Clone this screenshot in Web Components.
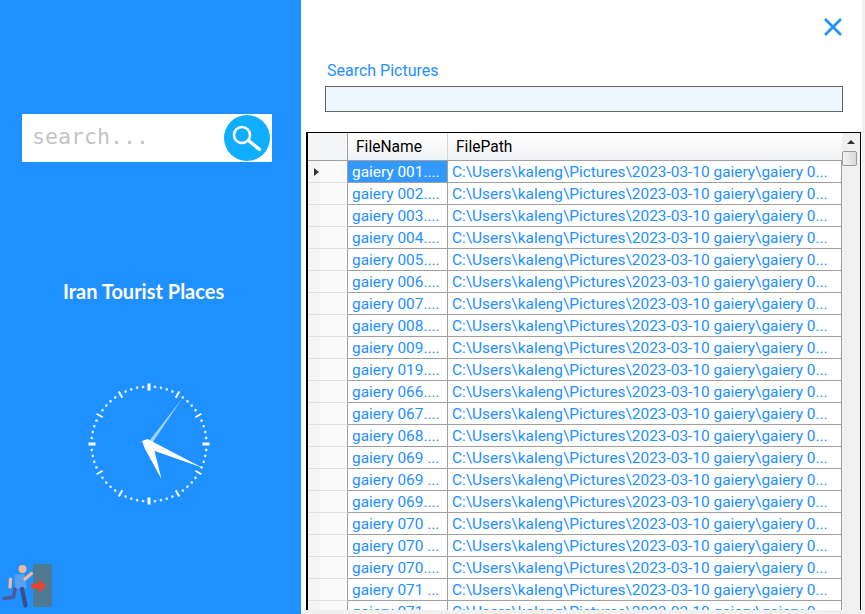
<!DOCTYPE html>
<html>
<head>
<meta charset="utf-8">
<style>
  html, body { margin: 0; height: 100%; background: #f0f0f0; overflow: hidden; }
  body { display: flex; width: 865px; height: 614px; font-family: Roboto, sans-serif; }
</style>
</head>
<body>
<side-panel></side-panel>
<main-panel></main-panel>

<script>
class SearchBox extends HTMLElement {
  constructor() {
    super();
    this.attachShadow({ mode: 'open' });
    this.shadowRoot.innerHTML = `
      <style>
        :host { display: flex; align-items: center; justify-content: space-between; width: 250px; height: 48px; background: #fff; border-radius: 1px; box-sizing: border-box; padding: 0 2px 0 10px; }
        span { font: 21.600px "DejaVu Sans Mono", monospace; color: #c4c4c4; position: relative; top: -2px; }
        svg { display: block; }
      </style>
      <span>search...</span>
      <svg width="46" height="46" viewBox="0 0 46 46">
        <circle cx="23" cy="23" r="23" fill="#0faeff"/>
        <circle cx="18" cy="20" r="8" fill="none" stroke="#fff" stroke-width="2.600"/>
        <path d="M25 26l10.500 8.500" stroke="#fff" stroke-width="3.400" stroke-linecap="round"/>
      </svg>`;
  }
}
customElements.define('search-box', SearchBox);

class ClockFace extends HTMLElement {
  constructor() {
    super();
    this.attachShadow({ mode: 'open' });
    let marks = '';
    for (let i = 0; i < 60; i++) {
      if (i % 5 === 0) {
        const big = i % 15 === 0;
        marks += `<rect x="-${big ? 1.500 : 1}" y="-60.500" width="${big ? 3 : 2}" height="7" fill="#fff" transform="rotate(${i * 6})"/>`;
      } else {
        marks += `<circle cx="0" cy="-57.500" r="1.400" fill="#cfe8ff" transform="rotate(${i * 6})"/>`;
      }
    }
    this.shadowRoot.innerHTML = `
      <style>
        :host { display: block; width: 122px; height: 122px; }
        svg { display: block; }
      </style>
      <svg width="122" height="122" viewBox="-61 -61 122 122">
        ${marks}
        <path d="M-1 -1.500L34 -46.500L1.500 1.500Z" fill="#fff" opacity=".6"/>
        <path d="M-7 -3L-1.500 -5L53 23.500L-3 4Z" fill="#fff"/>
        <path d="M-7 -3L3 -3L12.500 35L-4 5Z" fill="#fff"/>
      </svg>`;
  }
}
customElements.define('clock-face', ClockFace);

class ExitButton extends HTMLElement {
  constructor() {
    super();
    this.attachShadow({ mode: 'open' });
    this.shadowRoot.innerHTML = `
      <style>
        :host { display: block; width: 52px; height: 44px; }
        svg { display: block; }
      </style>
      <svg width="52" height="44" viewBox="0 0 52 44">
        <rect x="33" y="0" width="19" height="43" rx="1.500" fill="#4d7a90"/>
        <path d="M31 19.500h8v-4.500l7 7-7 7v-4.500h-8z" fill="#e8432f"/>
        <path d="M14.500 10.500l9.500-.500 1.500 4 1 10-11.500 1z" fill="#5aa0f0"/>
        <circle cx="22.500" cy="5" r="4" fill="#f5b79a"/>
        <path d="M25 15l6.500-5.500" stroke="#f5b79a" stroke-width="3.200" stroke-linecap="round"/>
        <path d="M10.500 15l-.500 8" stroke="#f5b79a" stroke-width="3.200" stroke-linecap="round"/>
        <path d="M15 25l-1.500 8-9.500 1.500" fill="none" stroke="#4b5b96" stroke-width="3.600" stroke-linecap="round" stroke-linejoin="round"/>
        <path d="M22 25l3.500 16.500" stroke="#3d4d85" stroke-width="4.200" stroke-linecap="round"/>
      </svg>`;
  }
}
customElements.define('exit-button', ExitButton);

class SidePanel extends HTMLElement {
  constructor() {
    super();
    this.attachShadow({ mode: 'open' });
    this.shadowRoot.innerHTML = `
      <style>
        :host { display: flex; flex-direction: column; align-items: flex-start; flex: 0 0 301px; height: 614px; background: #1e90ff; box-sizing: border-box; padding: 114px 0 0 22px; }
        h1 { margin: 116px 0 0 41px; font: 700 20px/26px Lato, sans-serif; color: #fff; white-space: nowrap; }
        clock-face { margin: 79px 0 0 65.500px; }
        exit-button { margin: auto 0 6px -22px; }
      </style>
      <search-box></search-box>
      <h1>Iran Tourist Places</h1>
      <clock-face></clock-face>
      <exit-button></exit-button>`;
  }
}
customElements.define('side-panel', SidePanel);

const NAMES = ['001....','002....','003....','004....','005....','006....','007....','008....','009....','019....','066....','067....','068....','069 ...','069 ...','069....','070 ...','070 ...','070....','071 ...','071 ...'];
const PATH = 'C:\\Users\\kaleng\\Pictures\\2023-03-10 gaiery\\gaiery 0...';

class PictureGrid extends HTMLElement {
  constructor() {
    super();
    this.attachShadow({ mode: 'open' });
    const rows = NAMES.map((n, i) => `
      <div class="row${i === 0 ? ' first' : ''}">
        <div class="rh">${i === 0 ? '<i></i>' : ''}</div>
        <div class="name">gaiery ${n}</div>
        <div class="path">${PATH}</div>
      </div>`).join('');
    this.shadowRoot.innerHTML = `
      <style>
        :host { display: flex; box-sizing: border-box; width: 555px; height: 478px; border: 1px solid #000; border-left-width: 2px; border-bottom: 0; background: #f0f0f0; overflow: hidden; }
        .table { flex: 0 0 534px; overflow: hidden; background: #f0f0f0; }
        .head { display: flex; height: 27px; background: linear-gradient(#fff, #f1f2f4); border-bottom: 1px solid #a0a0a0; }
        .head div { box-sizing: border-box; font: 15.600px/29px Roboto, sans-serif; color: #000; padding-left: 8px; }
        .head .corner { width: 40px; padding: 0; background: #f4f5f6; border-right: 1px solid #a0a0a0; }
        .head .n { width: 100px; border-right: 1px solid #d5d5d5; }
        .head .p { width: 394px; }
        .row { display: flex; height: 22px; box-sizing: border-box; }
        .rh { position: relative; flex: 0 0 40px; box-sizing: border-box; border-bottom: 1px solid #e0e0e0; border-right: 1px solid #a0a0a0; background: linear-gradient(90deg, #f4f5f6, #f4f5f6 12px, #fafafa 12px); }
        .rh i { position: absolute; left: 6px; top: 7px; border-left: 5px solid #333; border-top: 4px solid transparent; border-bottom: 4px solid transparent; }
        .name, .path { box-sizing: border-box; background: #fff; color: #1e90ff; font: 15.420px/22px Roboto, sans-serif; white-space: pre; overflow: hidden; border-bottom: 1px solid #a0a0a0; border-right: 1px solid #a0a0a0; padding-left: 4px; }
        .name { flex: 0 0 100px; }
        .path { flex: 0 0 394px; }
        .first .name { background: #3399ff; color: #fff; }
        .bar { flex: 0 0 18px; background: #f0f0f0; position: relative; }
        .bar b { position: absolute; left: 5px; top: 7px; border-bottom: 4px solid #333; border-left: 4px solid transparent; border-right: 4px solid transparent; }
        .bar u { position: absolute; left: 0; top: 18px; width: 13px; height: 13px; border: 1px solid #9a9a9a; border-radius: 2px; background: linear-gradient(90deg, #f4f4f4, #d8d8d8); }
      </style>
      <div class="table">
        <div class="head"><div class="corner"></div><div class="n">FileName</div><div class="p">FilePath</div></div>
        ${rows}
      </div>
      <div class="bar"><b></b><u></u></div>`;
  }
}
customElements.define('picture-grid', PictureGrid);

class MainPanel extends HTMLElement {
  constructor() {
    super();
    this.attachShadow({ mode: 'open' });
    this.shadowRoot.innerHTML = `
      <style>
        :host { display: flex; flex-direction: column; flex: 0 0 561px; height: 610px; background: #fff; box-sizing: border-box; }
        .top { display: flex; justify-content: flex-end; padding: 17px 19px 0 0; }
        svg { display: block; }
        label { margin: 24px 0 0 26px; font: 16px/20px Roboto, sans-serif; color: #1e90ff; }
        .input { box-sizing: border-box; width: 518px; height: 26px; margin: 5px 0 0 24px; background: #eef6ff; border: 1px solid #666; }
        picture-grid { margin: 20px 0 0 5px; }
      </style>
      <div class="top">
        <svg width="20" height="20" viewBox="0 0 20 20"><path d="M2 2L18 18M18 2L2 18" stroke="#1e90ff" stroke-width="2.600"/></svg>
      </div>
      <label>Search Pictures</label>
      <div class="input"></div>
      <picture-grid></picture-grid>`;
  }
}
customElements.define('main-panel', MainPanel);
</script>
</body>
</html>
